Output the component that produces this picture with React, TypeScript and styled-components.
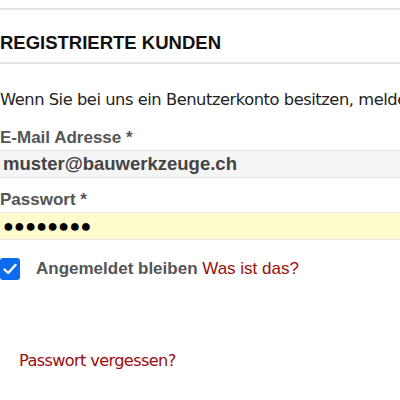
import React, { useState } from 'react'
import styled, { createGlobalStyle } from 'styled-components'

const GlobalStyle = createGlobalStyle`
  html, body {
    margin: 0;
    padding: 0;
    background: #fff;
  }
  body {
    font-family: "Liberation Sans", Arial, sans-serif;
    overflow: hidden;
  }
`

const Page = styled.div`
  width: 400px;
  height: 400px;
  padding-top: 8px;
  box-sizing: border-box;
  overflow: hidden;
`

const TitleBar = styled.div`
  height: 38px;
  padding: 14px 0 0;
  border-top: 2px solid #e4e4e4;
  border-bottom: 2px solid #e4e4e4;
  display: flex;
  align-items: center;
`

const Title = styled.h2`
  margin: 0;
  font-size: 18.5px;
  font-weight: bold;
  color: #111;
  white-space: nowrap;
`

const Intro = styled.p`
  margin: 26px 0 0;
  font-family: "DejaVu Sans", Tahoma, sans-serif;
  font-size: 16.3px;
  letter-spacing: -0.45px;
  line-height: 20px;
  color: #222;
  white-space: nowrap;
  overflow: hidden;
`

const Fields = styled.div`
  margin-top: 18px;
  display: flex;
  flex-direction: column;
  gap: 12px;
`

const Field = styled.div`
  display: flex;
  flex-direction: column;
`

const Label = styled.label`
  font-size: 17px;
  font-weight: bold;
  color: #555;
  line-height: 20px;
  white-space: nowrap;
`

const Input = styled.div<{ $fill: string }>`
  height: 26px;
  margin-top: 2px;
  background: ${({ $fill }) => $fill};
  border-top: 1px solid #e6e6e6;
  border-bottom: 1px solid #e6e6e6;
  display: flex;
  align-items: center;
  padding-left: 3px;
  font-size: 18.5px;
  font-weight: bold;
  color: #444;
  white-space: nowrap;
`

const Dots = styled.span`
  font-size: 18px;
  color: #000;
  letter-spacing: 0.2px;
`

const RememberRow = styled.div`
  margin-top: 18px;
  display: flex;
  align-items: center;
  gap: 16px;
`

const CheckBox = styled.button<{ $on: boolean }>`
  width: 20px;
  height: 22px;
  padding: 0;
  border-radius: 3px;
  border: ${({ $on }) => ($on ? 'none' : '1px solid #767676')};
  background: ${({ $on }) => ($on ? '#0b6cf0' : '#fff')};
  display: flex;
  align-items: center;
  justify-content: center;
  cursor: pointer;
`

const RememberText = styled.span`
  font-size: 17px;
  font-weight: bold;
  color: #555;
  white-space: nowrap;
`

const HelpLink = styled.a`
  font-weight: normal;
  color: #9b0c0c;
  text-decoration: none;
`

const Forgot = styled.a`
  display: block;
  margin: 71px 0 0 19px;
  font-family: "DejaVu Sans", Tahoma, sans-serif;
  font-size: 16.2px;
  line-height: 19px;
  letter-spacing: -0.65px;
  color: #9b0c0c;
  text-decoration: none;
  white-space: nowrap;
`

export default function App() {
  const [remember, setRemember] = useState(true)
  return (
    <Page>
      <GlobalStyle />
      <TitleBar>
        <Title>REGISTRIERTE KUNDEN</Title>
      </TitleBar>
      <Intro>Wenn Sie bei uns ein Benutzerkonto besitzen, melden Sie sich bitte an.</Intro>
      <Fields>
        <Field>
          <Label>E-Mail Adresse *</Label>
          <Input $fill="#f5f5f5">muster@bauwerkzeuge.ch</Input>
        </Field>
        <Field>
          <Label>Passwort *</Label>
          <Input $fill="#fefbcd">
            <Dots>●●●●●●●●</Dots>
          </Input>
        </Field>
      </Fields>
      <RememberRow>
        <CheckBox $on={remember} onClick={() => setRemember(!remember)} aria-label="Angemeldet bleiben">
          {remember && (
            <svg width="14" height="12" viewBox="0 0 14 12">
              <path d="M1.5 6.5 L5.2 10 L12.5 2" fill="none" stroke="#fff" strokeWidth="2.4" strokeLinecap="round" strokeLinejoin="round" />
            </svg>
          )}
        </CheckBox>
        <RememberText>
          Angemeldet bleiben <HelpLink href="#">Was ist das?</HelpLink>
        </RememberText>
      </RememberRow>
      <Forgot href="#">Passwort vergessen?</Forgot>
    </Page>
  )
}
